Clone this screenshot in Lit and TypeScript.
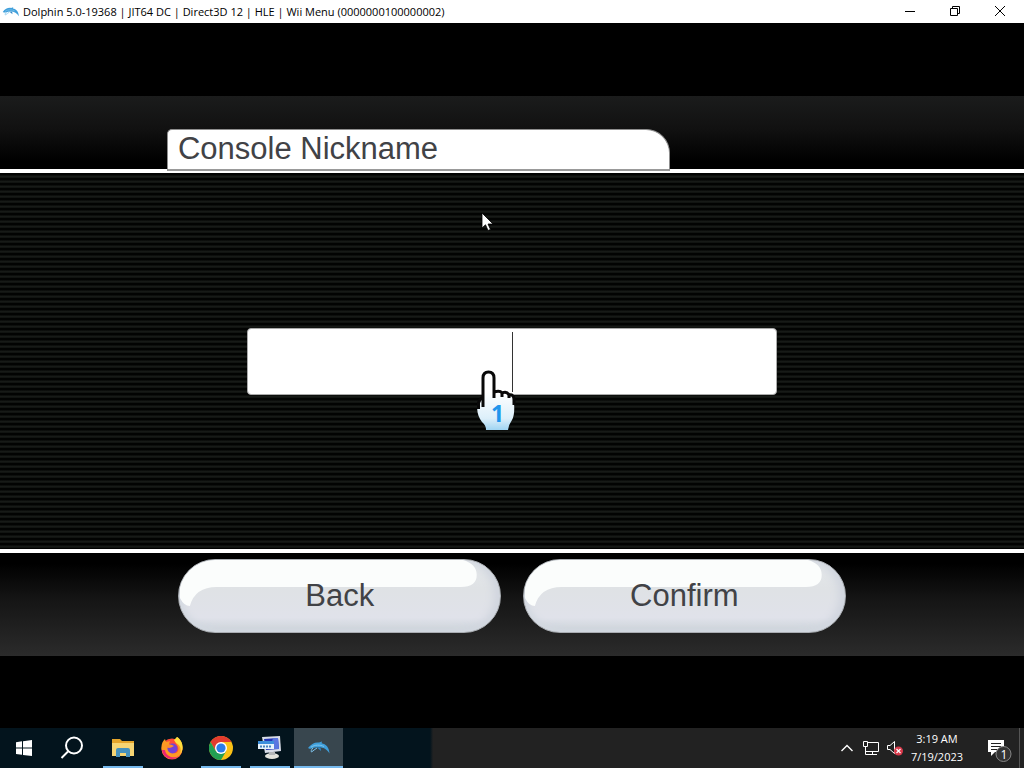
import { LitElement, html, css } from "lit";
import { customElement } from "lit/decorators.js";

const dolphin = html`<svg viewBox="0 0 24 14" aria-hidden="true">
  <path d="M1 7 C4 3 8 1 12 1.600 L15 .6 L14.600 2.200 C19 3 22 6 22.500 12.500 C20 8 16 6 11 6.200 C7 6.400 4 7.800 2.500 7.800 Z" fill="#3f9fdb"/>
  <path d="M4 6.200 C8 3.500 13 3.600 17 5.500 M6 7 C4 9 4 10 4.500 11 C6 9.500 8 8.500 10 7" fill="none" stroke="#7fc4ec" stroke-width="1"/>
  <path d="M10 6.500 L14 10 L13.500 6.500 Z" fill="#3189c8"/>
</svg>`;

@customElement("title-bar")
export class TitleBar extends LitElement {
  static styles = css`
    :host {
      display: flex;
      align-items: center;
      height: 23px;
      padding-right: 2px;
      background: #fff;
      color: #000;
      font: 11px/20px "Open Sans", "Noto Sans", sans-serif;
    }
    .logo { width: 18px; height: 12px; margin: 0 3px 0 2px; display: flex; }
    .logo svg { width: 18px; height: 12px; }
    .title { flex: 1; min-width: 0; white-space: nowrap; overflow: hidden; }
    button {
      width: 45px;
      height: 23px;
      padding: 0 0 2px;
      border: 0;
      background: none;
      display: grid;
      place-items: center;
    }
    button:hover { background: #e5e5e5; }
    button svg { width: 12px; height: 12px; fill: none; stroke: #000; }
  `;
  render() {
    return html`
      <span class="logo">${dolphin}</span>
      <span class="title">Dolphin 5.0-19368 | JIT64 DC | Direct3D 12 | HLE | Wii Menu (0000000100000002)</span>
      <button aria-label="Minimize"><svg viewBox="0 0 12 12"><path d="M1 6.500H11"/></svg></button>
      <button aria-label="Restore"><svg viewBox="0 0 12 12"><path d="M1.500 3.500H8.500V10.500H1.500Z M3.500 3.500V1.500H10.500V8.500H8.500"/></svg></button>
      <button aria-label="Close"><svg viewBox="0 0 12 12"><path d="M1 1L11 11M11 1L1 11"/></svg></button>
    `;
  }
}

@customElement("console-screen")
export class ConsoleScreen extends LitElement {
  static styles = css`
    :host {
      display: flex;
      flex-direction: column;
      box-sizing: border-box;
      position: relative;
      padding: 73px 0 72px;
      background: #000;
      font-family: "Liberation Sans", Arial, sans-serif;
      color: #414246;
    }
    header {
      display: flex;
      align-items: flex-end;
      height: 73px;
      background: linear-gradient(#1b1c1c, #111 45%, #000 90%);
    }
    h1 {
      box-sizing: border-box;
      z-index: 1;
      width: 49.1%;
      height: 42px;
      margin: 0 0 -2px 16.3%;
      padding: 0 10px;
      border: 1px solid #8e8e8e;
      border-bottom: 2px solid #999;
      border-radius: 5px 24px 0 0;
      background: #fff;
      font-size: 31px;
      line-height: 38px;
      font-weight: 400;
      white-space: nowrap;
    }
    main {
      flex: 1;
      min-height: 0;
      display: grid;
      place-items: center;
      border: solid #fff;
      border-width: 4px 0;
      background: repeating-linear-gradient(#020302 0 2px, #171a17 3px 4px, #0b0d0b 5px 5px);
    }
    .field { position: relative; width: 51.8%; height: 67px; }
    input {
      box-sizing: border-box;
      width: 100%;
      height: 100%;
      padding: 0 12px;
      border: 1px solid #aaa;
      border-radius: 4px;
      background: #fff;
      font: inherit;
      font-size: 31px;
      text-align: center;
      outline: 0;
    }
    .caret { position: absolute; left: 50%; top: 4px; bottom: 3px; width: 1px; background: #333; }
    .hand { position: absolute; left: 43%; top: 41px; width: 44px; height: 64px; pointer-events: none; }
    .arrow { position: absolute; left: 47%; top: 189px; width: 13px; height: 20px; pointer-events: none; }
    footer {
      display: flex;
      justify-content: center;
      align-items: flex-start;
      gap: 22px;
      box-sizing: border-box;
      height: 103px;
      padding-top: 6px;
      background: linear-gradient(#000 10%, #151515 45%, #2b2b2b);
    }
    .pill {
      position: relative;
      width: 31.5%;
      height: 74px;
      padding: 0;
      border: 1px solid #a9adb2;
      border-radius: 37px;
      overflow: hidden;
      background: linear-gradient(#e4e8ea, #dfe2e5 40%, #e0e2ea 80%, #cbd2d8);
      box-shadow: inset 3px -2px 6px #d3d9e1, inset -6px 0 8px #d0d5de;
      color: inherit;
      font: 31px/72px "Liberation Sans", Arial, sans-serif;
    }
    .gloss { position: absolute; left: 0; top: 0; width: 100%; height: 100%; }
    .label { position: relative; }
  `;
  pill(label: string) {
    return html`<button class="pill">
      <svg class="gloss" viewBox="0 0 323 72" preserveAspectRatio="none" aria-hidden="true">
        <path d="M11 46 Q5 46 1 38 V0 H286 Q300 4 300 15 Q300 27 284 27 H38 Q16 27 11 46Z" fill="#fbfdfc"/>
      </svg>
      <span class="label">${label}</span>
    </button>`;
  }
  render() {
    return html`
      <header><h1 id="nick">Console Nickname</h1></header>
      <main>
        <div class="field">
          <input type="text" aria-labelledby="nick" maxlength="10" />
          <span class="caret"></span>
          <svg class="hand" viewBox="0 0 44 64" aria-hidden="true">
            <defs>
              <linearGradient id="glove" x1="0" y1="0" x2="0" y2="1">
                <stop offset=".35" stop-color="#fff"/>
                <stop offset=".8" stop-color="#dceffa"/>
                <stop offset="1" stop-color="#9fd4f2"/>
              </linearGradient>
            </defs>
            <path d="M3 36 C1 40 3 48 7 53 Q11 56 11 61 H33 Q34 55 37 51 Q40 46 39 34 V30 Q38 25 34 26 Q32 22 27 24 Q25 21 19 23 V9 Q19 3 13.500 3 Q8 3 8 9 V29 Q4 31 3 36Z" fill="url(#glove)"/>
            <path d="M3.500 40 V34 Q4 30 8 28 V9 Q8 3 13.500 3 Q19 3 19 9 V23 Q25 21 27 24 Q32 22 34 26 Q39 25 39 31 V36 M8 28 V38 M19 22 V29 M27 24 V28 M34 26 V29" fill="none" stroke="#080808" stroke-width="3" stroke-linejoin="round"/>
            <text x="16" y="53" font-family="Noto Sans" font-weight="700" font-size="23" fill="#2196ec">1</text>
          </svg>
        </div>
      </main>
      <footer>${this.pill("Back")}${this.pill("Confirm")}</footer>
      <svg class="arrow" viewBox="0 0 13 20" aria-hidden="true">
        <path d="M1 1V16L4.500 12.800L7 18.500L9.500 17.400L7 12H12Z" fill="#fff" stroke="#000" stroke-width=".8"/>
      </svg>
    `;
  }
}

@customElement("task-bar")
export class TaskBar extends LitElement {
  static styles = css`
    :host {
      display: flex;
      justify-content: space-between;
      height: 40px;
      background: linear-gradient(90deg, #03141d 0 42%, #222 42.3%);
      color: #fff;
      font: 11px/18px "Open Sans", "Noto Sans", sans-serif;
    }
    nav, .tray { display: flex; }
    .tray { align-items: center; }
    button {
      box-sizing: border-box;
      padding: 0;
      border: 0;
      background: none;
      color: inherit;
      font: inherit;
      height: 40px;
      display: grid;
      place-items: center;
    }
    .app { width: 49px; }
    .shell { width: 48px; }
    .search { margin-right: 2px; }
    .app svg, .shell svg { width: 24px; height: 24px; }
    .open { background: linear-gradient(#76b9ed, #76b9ed) center bottom / 40px 2px no-repeat; }
    .active { background: linear-gradient(#76b9ed, #76b9ed) center bottom / 100% 2px no-repeat #38464e; }
    .clock { width: 64px; margin-right: 14px; }
    .notes { width: 32px; margin-right: 4px; }
    .desktop { width: 5px; border-left: 1px solid #555; }
  `;
  render() {
    return html`
      <nav>
        <button class="shell" aria-label="Start"><svg viewBox="0 0 24 24" fill="#fff"><path d="M4 6.200L10 5.300V11.500H4ZM11 5.200L20 4V11.500H11ZM4 12.500H10V18.800L4 17.900ZM11 12.500H20V20L11 18.900Z"/></svg></button>
        <button class="shell search" aria-label="Search"><svg viewBox="0 0 24 24" fill="none" stroke="#fff" stroke-width="2"><circle cx="14" cy="9.500" r="8"/><path d="M8 15.500L1.500 22"/></svg></button>
        <button class="app open" aria-label="File Explorer"><svg viewBox="0 0 24 24"><path d="M1 3H9L11 5H23V20H1Z" fill="#e5a52b"/><path d="M1 7H23V20H1Z" fill="#f7d573"/><path d="M5 21V14Q5 12 7 12H17Q19 12 19 14V21H15V17H9V21Z" fill="#4691bd"/></svg></button>
        <button class="app" aria-label="Firefox"><svg viewBox="0 0 24 24">
          <circle cx="12" cy="13" r="10.500" fill="#ff4b38"/>
          <path d="M1.500 13C1 8 3 5 5 3L6 6L10 5L9 8L13 10C8 11 8 16 13 17C18 18 20 13 17 9L15 5L17 1C22 4 25 12 20 19C14 26 3 24 1.500 13Z" fill="#ff9a24"/>
          <path d="M17 1C22 4 25 12 20 19C22 12 20 9 16 7L14 4Z" fill="#ffdf3d"/>
          <path d="M2 14C3 22 12 26 19 20C14 23 6 21 5 14Z" fill="#ef2671"/>
          <circle cx="12.500" cy="12.500" r="5" fill="#7541d6"/><path d="M6 10Q10 7 14 10Q11 12 9 12Q7 12 6 10Z" fill="#ff8d2b"/>
        </svg></button>
        <button class="app open" aria-label="Chrome"><svg viewBox="0 0 24 24">
          <circle cx="12" cy="12" r="12" fill="#fbc116"/>
          <path d="M1.600 6A12 12 0 0 1 22.400 6H12V12L6.800 15Z" fill="#e33b2e"/>
          <path d="M1.600 6A12 12 0 0 0 12 24L17.200 15L12 17L6.800 15Z" fill="#22a052"/>
          <circle cx="12" cy="12" r="6" fill="#fff"/><circle cx="12" cy="12" r="4.600" fill="#2b7de9"/>
        </svg></button>
        <button class="app open" aria-label="Run"><svg viewBox="0 0 24 24">
          <path d="M4 1L22 0L23 15L7 17Z" fill="#d9dde8"/><path d="M6 3L20 2L21 13L8 14Z" fill="#2435b5"/><path d="M15 2L20 2L21 13L12 13Z" fill="#5b75e0"/>
          <ellipse cx="14" cy="20" rx="7" ry="3" fill="#e3e3dc"/><path d="M11 16H17V19H11Z" fill="#b4b6b8"/>
          <path d="M0 5H16V13H0Z" fill="#e8f3fc"/><path d="M0 5H16V8H0Z" fill="#3d8fdc"/><path d="M2 10.500H13" stroke="#4a86bf" stroke-width="2" stroke-dasharray="2 1"/>
        </svg></button>
        <button class="app active" aria-label="Dolphin">${dolphin}</button>
      </nav>
      <div class="tray">
        <button aria-label="Show hidden icons"><svg width="24" height="16" viewBox="0 0 24 16" fill="none" stroke="#fff" stroke-width="1.400"><path d="M6.500 11L12 5.500L17.500 11"/></svg></button>
        <button aria-label="Network"><svg width="24" height="20" viewBox="0 0 24 20" fill="none" stroke="#fff"><path d="M8 4.500H19.500V13.500H6.500V9M13.500 13.500V16.500M9 16.500H18M4.500 3.500H8.500V8.500H4.500ZM6.500 9V16.500H9"/></svg></button>
        <button aria-label="Volume"><svg width="22" height="20" viewBox="0 0 22 20"><path d="M4.500 7.500H7L11.500 3.500V15.500L7 11.500H4.500Z" fill="none" stroke="#fff"/><circle cx="15.500" cy="13" r="4.500" fill="#d93a4b"/><path d="M13.500 11L17.500 15M17.500 11L13.500 15" stroke="#fff" stroke-width="1.200"/></svg></button>
        <button class="clock"><span>3:19 AM<br />7/19/2023</span></button>
        <button class="notes" aria-label="1 notification"><svg width="28" height="28" viewBox="0 0 28 28">
          <path d="M3 6H19V18H10L6 22V18H3Z" fill="#fff"/><path d="M6 9.500H16M6 12.500H16M6 15.500H12" stroke="#222"/>
          <circle cx="18.500" cy="20" r="7.500" fill="#333" stroke="#888"/><text x="15.500" y="24.500" font-size="12" font-family="Open Sans" fill="#fff">1</text>
        </svg></button>
        <button class="desktop" aria-label="Show desktop"></button>
      </div>
    `;
  }
}

@customElement("app-root")
export class AppRoot extends LitElement {
  static styles = css`
    :host { display: flex; flex-direction: column; height: 100vh; overflow: hidden; }
    console-screen { flex: 1; min-height: 0; }
  `;
  render() {
    return html`<title-bar></title-bar><console-screen></console-screen><task-bar></task-bar>`;
  }
}
